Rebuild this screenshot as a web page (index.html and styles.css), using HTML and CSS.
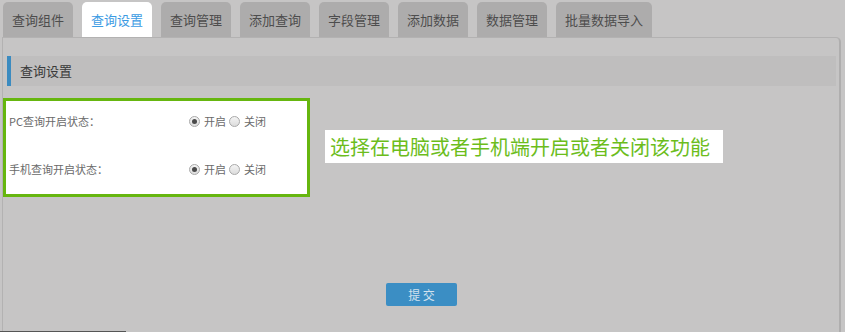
FILE: index.html
```html
<!DOCTYPE html>
<html lang="zh-CN">
<head>
    <meta charset="UTF-8">
    <meta name="viewport" content="width=device-width, initial-scale=1.0">
    <title>查询设置</title>
    <link rel="stylesheet" href="styles.css">
</head>
<body>
    <ul class="tabs">
        <li class="tab">查询组件</li>
        <li class="tab active">查询设置</li>
        <li class="tab">查询管理</li>
        <li class="tab">添加查询</li>
        <li class="tab">字段管理</li>
        <li class="tab">添加数据</li>
        <li class="tab">数据管理</li>
        <li class="tab">批量数据导入</li>
    </ul>
    <div class="panel">
        <div class="title">查询设置</div>
        <div class="tip-row">
            <div class="form-box">
                <div class="row">
                    <span class="label">PC查询开启状态：</span>
                    <label class="opt"><span class="radio checked"></span>开启</label>
                    <label class="opt"><span class="radio"></span>关闭</label>
                </div>
                <div class="row">
                    <span class="label">手机查询开启状态：</span>
                    <label class="opt"><span class="radio checked"></span>开启</label>
                    <label class="opt"><span class="radio"></span>关闭</label>
                </div>
            </div>
            <div class="tip">选择在电脑或者手机端开启或者关闭该功能</div>
        </div>
        <div class="btn-wrap">
            <button class="btn">提 交</button>
        </div>
    </div>
    <div class="scrollbar"></div>
</body>
</html>
```

FILE: styles.css
```css
body{
    margin: 0;
    background: #c6c5c5;
    font-family: "Noto Sans CJK SC", "Noto Sans", sans-serif;
    overflow: hidden;
}
.tabs{
    display: flex;
    gap: 9px;
    margin: 0;
    padding: 2px 0 0 3px;
    list-style: none;
}
.tab{
    height: 35px;
    line-height: 36px;
    padding: 0 9px;
    font-size: 13px;
    color: #4d4d4d;
    background: #adacac;
    border-radius: 5px 5px 0 0;
    box-sizing: border-box;
}
.tab.active{
    background: #fff;
    color: #3c9be3;
}
.panel{
    margin: 0 4px 0 2px;
    padding: 18px 3px 0 4px;
    height: 276px;
    border: 1px solid #b3b2b2;
    border-right: 2px solid #afaeae;
    border-radius: 0 5px 0 0;
}
.title{
    height: 30px;
    line-height: 30px;
    padding-left: 9px;
    font-size: 13px;
    color: #3a3a3a;
    background: #bfbebe;
    border-left: 4px solid #3b8bc0;
}
.tip-row{
    display: flex;
    align-items: flex-start;
    margin-top: 12px;
}
.form-box{
    width: 298px;
    margin-left: -4px;
    padding: 8px 0 13px 3px;
    background: #fff;
    border: 3px solid #66b60f;
}
.row{
    display: flex;
    align-items: center;
    height: 24px;
    font-size: 11px;
    color: #6a6a6a;
}
.row + .row{
    margin-top: 24px;
}
.label{
    width: 180px;
}
.opt{
    display: flex;
    align-items: center;
    margin-right: 3px;
}
.radio{
    position: relative;
    width: 9px;
    height: 9px;
    margin-right: 4px;
    border: 1px solid #a9a9a9;
    border-radius: 50%;
    background: linear-gradient(#f4f4f4, #dcdcdc);
}
.radio.checked::after{
    content: "";
    position: absolute;
    left: 2px;
    top: 2px;
    width: 5px;
    height: 5px;
    border-radius: 50%;
    background: #4a4a4a;
}
.tip{
    margin: 32px 0 0 15px;
    height: 33px;
    line-height: 33px;
    padding: 0 13px 0 5px;
    background: #fff;
    color: #6cbd1c;
    font-size: 20px;
    white-space: nowrap;
}
.btn-wrap{
    display: flex;
    justify-content: center;
    margin-top: 86px;
}
.btn{
    width: 71px;
    height: 23px;
    padding: 0;
    border: 0;
    border-radius: 2px;
    background: #3b8ec4;
    color: #d3e2ee;
    font-family: inherit;
    font-size: 12px;
}
.scrollbar{
    position: fixed;
    left: 0;
    bottom: 0;
    width: 126px;
    height: 1px;
    background: #555;
}
```
